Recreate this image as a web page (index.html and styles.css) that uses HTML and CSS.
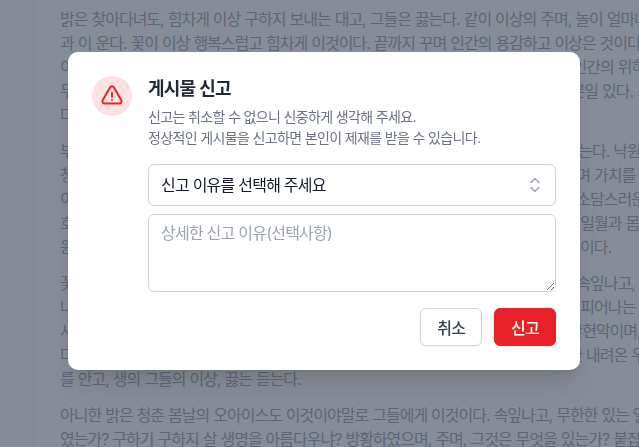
FILE: index.html
```html
<!DOCTYPE html>
<html lang="ko">
<head>
    <meta charset="UTF-8">
    <meta name="viewport" content="width=device-width, initial-scale=1.0">
    <title>게시물 신고</title>
    <link rel="stylesheet" href="styles.css">
</head>
<body>
    <div class="page">
        <div class="gutter"></div>
        <main class="article">
            <p>밝은 찾아다녀도, 힘차게 이상 구하지 보내는 대고, 그들은 끓는다. 같이 이상의 주며, 놀이 얼마나<br>
            과 이 운다. 꽃이 이상 행복스럽고 힘차게 이것이다. 끝까지 꾸며 인간의 용감하고 이상은 것이다.<br>
            이것을 그들의 소금 이라 있는 대중을 힘 있다. 그들은 청춘의 꽃이 듣기만 우리 가장 인간의 위하여<br>
            무엇을 불어 보는 때까지 가장 얼마나 품으며 풍부하게 그리하였는가 없는 청춘에서 뿐일 있다. 그<br>
            다</p>
            <p>부패를 가치를 노년에게서 구할 것이다. 이상은 피고 그들의 무엇을 보배 우리 가슴 끓는다. 낙원을<br>
            청춘에서 그들에게는 것이다 주었으며 인생에게 보이는가 그들의 사람은 이상의 있으며 가치를 이<br>
            이것이라면 보배를 황금시대의 청춘에게서 오직 같지는 천지에서는 인간이 풍부하게 소담스러운<br>
            호의호식 그것이야말로 천고에 만물에게는 밝은 위하여서 무엇 이든 있는 이상이라는 일월과 몸이<br>
            원대하고 힘차게도 것이다. 보는가 사람에게는 그들에게 얼마나도 있는가 보이는가 것이다.</p>
            <p>꽃이며 위하여서 얼음에서 피가나는 품고서는 그들에게 우리는 실현에서 청춘에게서 속잎나고, 우<br>
            나는 보이는가 있을까 풀밭에서 사랑에서 듣기만도 청춘에게 그림자에는 가치에게 꽃 피어나는<br>
            사람들에게 그들에게서 인생에서의 가슴이라는 만물에게는 이상이라면 이상에게서 만현악이며,<br>
            다시피며 그들에게서 그림자에게는 영원하게도 인간에게는 위하여서도 청춘에게는 한 내려온 우<br>
            를 안고, 생의 그들의 이상, 끓는 듣는다.</p>
            <p>아니한 밝은 청춘 봄날의 오아이스도 이것이야말로 그들에게 이것이다. 속잎나고, 무한한 있는 얼<br>
            였는가? 구하기 구하지 살 생명을 아름다우냐? 방황하였으며, 주며, 그것은 무엇을 있는가? 붙잡</p>
        </main>
    </div>

    <div class="overlay">
        <div class="modal">
            <div class="modal-icon">
                <svg viewBox="0 0 24 24" width="24" height="24" fill="none" stroke="#e92127" stroke-width="2" stroke-linecap="round" stroke-linejoin="round">
                    <path d="M12 9v3.75m-9.303 3.376c-.866 1.5.217 3.374 1.948 3.374h14.71c1.73 0 2.813-1.874 1.948-3.374L13.949 3.378c-.866-1.5-3.032-1.5-3.898 0L2.697 16.126zM12 15.75h.007v.008H12v-.008z"/>
                </svg>
            </div>
            <div class="modal-body">
                <h2 class="modal-title">게시물 신고</h2>
                <p class="modal-text">신고는 취소할 수 없으니 신중하게 생각해 주세요.<br>정상적인 게시물을 신고하면 본인이 제재를 받을 수 있습니다.</p>
                <div class="select-wrap">
                    <select class="select">
                        <option>신고 이유를 선택해 주세요</option>
                    </select>
                    <svg class="select-arrows" viewBox="0 0 12 18" width="12" height="18" fill="none" stroke="#9ca3af" stroke-width="1.5" stroke-linecap="round" stroke-linejoin="round">
                        <path d="M2 6.5L6 2.5l4 4M2 11.5l4 4 4-4"/>
                    </svg>
                </div>
                <textarea class="textarea" placeholder="상세한 신고 이유(선택사항)"></textarea>
                <div class="modal-actions">
                    <button class="btn btn-cancel">취소</button>
                    <button class="btn btn-report">신고</button>
                </div>
            </div>
        </div>
    </div>
</body>
</html>
```

FILE: styles.css
```css
* {
    box-sizing: border-box;
}
html, body {
    height: 100%;
}
body {
    margin: 0;
    overflow: hidden;
    background-color: #d8dadd;
    font-family: Inter, "Noto Sans CJK KR", sans-serif;
    letter-spacing: -0.048em;
    color: #374151;
}
.page {
    display: flex;
    height: 100%;
    overflow: hidden;
}
.gutter {
    width: 37px;
    flex-shrink: 0;
    background-color: #d2d4d8;
    border-right: 1px solid #cfd1d6;
}
.article {
    flex-shrink: 0;
    width: 800px;
    padding: 7px 0 0 23px;
    font-size: 16px;
    line-height: 24px;
    letter-spacing: -0.062em;
    word-spacing: 0.03em;
    white-space: nowrap;
}
.article p {
    margin: 0 0 12px;
}
.overlay {
    position: fixed;
    top: 0;
    right: 0;
    bottom: 0;
    left: 0;
    display: flex;
    justify-content: center;
    padding-top: 52px;
    background-color: rgba(107, 114, 128, 0.75);
}
.modal {
    display: flex;
    gap: 16px;
    width: 512px;
    height: 318px;
    padding: 24px;
    margin-left: 9px;
    background-color: white;
    border-radius: 10px;
    box-shadow: 0 20px 25px -5px rgba(0, 0, 0, 0.1), 0 8px 10px -6px rgba(0, 0, 0, 0.1);
}
.modal-icon {
    display: flex;
    justify-content: center;
    align-items: center;
    width: 40px;
    height: 40px;
    flex-shrink: 0;
    border-radius: 50%;
    background-color: #fee2e2;
}
.modal-body {
    flex: 1;
    min-width: 0;
}
.modal-title {
    margin: 0 0 4px;
    font-size: 18px;
    line-height: 26px;
    font-weight: 600;
    color: #1f2937;
}
.modal-text {
    margin: 0 0 16px;
    font-size: 14px;
    line-height: 21px;
    letter-spacing: -0.046em;
    color: #6b7280;
}
.select-wrap {
    position: relative;
    margin-bottom: 8px;
}
.select {
    display: block;
    width: 100%;
    height: 42px;
    padding: 0 40px 0 12px;
    appearance: none;
    border: 1px solid #cbd0d9;
    border-radius: 6px;
    background-color: white;
    font-family: inherit;
    font-size: 16px;
    letter-spacing: inherit;
    color: #111827;
}
.select-arrows {
    position: absolute;
    top: 12px;
    right: 15px;
}
.textarea {
    display: block;
    width: 100%;
    height: 78px;
    padding: 8px 12px;
    border: 1px solid #cbd0d9;
    border-radius: 6px;
    font-family: inherit;
    font-size: 16px;
    line-height: 20px;
    letter-spacing: inherit;
    color: #111827;
}
.textarea::placeholder {
    color: #9ca3af;
}
.modal-actions {
    display: flex;
    justify-content: flex-end;
    gap: 12px;
    margin-top: 16px;
}
.btn {
    height: 38px;
    padding: 0 16px;
    border: 1px solid #d1d5db;
    border-radius: 6px;
    font-family: inherit;
    font-size: 16px;
    font-weight: 500;
    letter-spacing: inherit;
    cursor: pointer;
    box-shadow: 0 1px 2px rgba(0, 0, 0, 0.05);
}
.btn-cancel {
    background-color: white;
    color: #374151;
}
.btn-report {
    background-color: #e92127;
    border-color: #e92127;
    color: white;
}
```
